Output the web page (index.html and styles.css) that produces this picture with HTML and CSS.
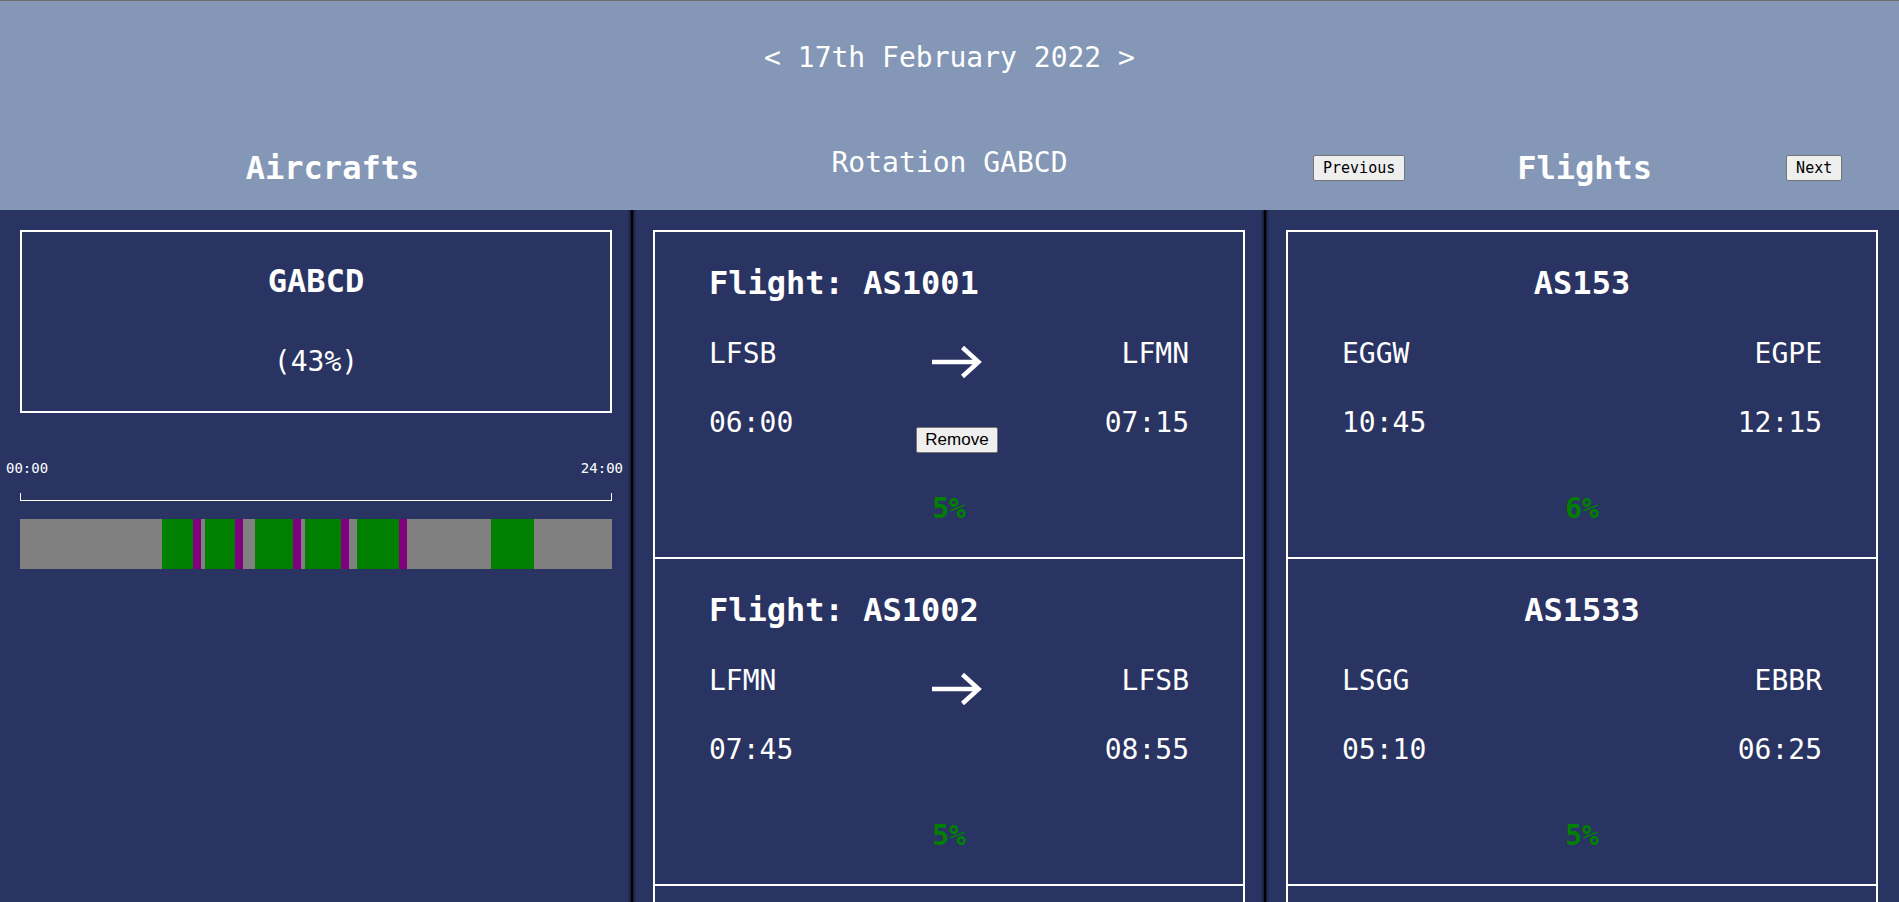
FILE: index.html
```html
<!DOCTYPE html>
<html lang="en">
<head>
<meta charset="utf-8">
<title>Rotation planner</title>
<link rel="stylesheet" href="styles.css">
</head>
<body>
<header class="topbar">
  <div class="date-nav">&lt; 17th February 2022 &gt;</div>
  <div class="titles">
    <div class="title-aircrafts"><h2 class="title-big">Aircrafts</h2></div>
    <div class="title-rotation"><h3 class="title-mid">Rotation GABCD</h3></div>
    <div class="title-flights">
      <button class="nav-btn">Previous</button>
      <h2 class="title-big flights-title">Flights</h2>
      <button class="nav-btn">Next</button>
    </div>
  </div>
</header>

<main class="board">
  <section class="column">
    <div class="aircraft-card">
      <h2 class="card-title">GABCD</h2>
      <p class="usage">(43%)</p>
    </div>
    <div class="timeline">
      <div class="time-labels"><span>00:00</span><span>24:00</span></div>
      <div class="bracket"></div>
      <div class="bar">
        <div class="seg idle" style="width:23.93%"></div>
        <div class="seg flight" style="width:5.24%"></div>
        <div class="seg turn" style="width:1.39%"></div>
        <div class="seg idle" style="width:0.68%"></div>
        <div class="seg flight" style="width:5.05%"></div>
        <div class="seg turn" style="width:1.37%"></div>
        <div class="seg idle" style="width:2.01%"></div>
        <div class="seg flight" style="width:6.47%"></div>
        <div class="seg turn" style="width:1.32%"></div>
        <div class="seg idle" style="width:0.76%"></div>
        <div class="seg flight" style="width:6.0%"></div>
        <div class="seg turn" style="width:1.39%"></div>
        <div class="seg idle" style="width:1.32%"></div>
        <div class="seg flight" style="width:7.1%"></div>
        <div class="seg turn" style="width:1.35%"></div>
        <div class="seg idle" style="width:14.16%"></div>
        <div class="seg flight" style="width:7.3%"></div>
        <div class="seg idle" style="width:13.16%"></div>
      </div>
    </div>
  </section>

  <section class="column">
    <div class="card-list">
      <div class="flight-card">
        <h2 class="card-title">Flight: AS1001</h2>
        <div class="route">
          <span>LFSB</span>
          <div class="mid"><svg class="arrow" width="52" height="36" viewBox="0 0 52 36"><path d="M1 18H47M31.5 3.5L47.5 18L31.5 32.5" fill="none" stroke="#fff" stroke-width="4.5"/></svg></div>
          <span class="end">LFMN</span>
        </div>
        <div class="route">
          <span>06:00</span>
          <div class="mid"><button class="remove-btn">Remove</button></div>
          <span class="end">07:15</span>
        </div>
        <p class="pct">5%</p>
      </div>
      <div class="flight-card">
        <h2 class="card-title">Flight: AS1002</h2>
        <div class="route">
          <span>LFMN</span>
          <div class="mid"><svg class="arrow" width="52" height="36" viewBox="0 0 52 36"><path d="M1 18H47M31.5 3.5L47.5 18L31.5 32.5" fill="none" stroke="#fff" stroke-width="4.5"/></svg></div>
          <span class="end">LFSB</span>
        </div>
        <div class="route">
          <span>07:45</span>
          <div class="mid"></div>
          <span class="end">08:55</span>
        </div>
        <p class="pct">5%</p>
      </div>
      <div class="flight-card placeholder"></div>
    </div>
  </section>

  <section class="column">
    <div class="card-list">
      <div class="flight-card centered">
        <h2 class="card-title">AS153</h2>
        <div class="route two">
          <span>EGGW</span>
          <span class="end">EGPE</span>
        </div>
        <div class="route two">
          <span>10:45</span>
          <span class="end">12:15</span>
        </div>
        <p class="pct">6%</p>
      </div>
      <div class="flight-card centered">
        <h2 class="card-title">AS1533</h2>
        <div class="route two">
          <span>LSGG</span>
          <span class="end">EBBR</span>
        </div>
        <div class="route two">
          <span>05:10</span>
          <span class="end">06:25</span>
        </div>
        <p class="pct">5%</p>
      </div>
      <div class="flight-card placeholder"></div>
    </div>
  </section>
</main>
</body>
</html>
```

FILE: styles.css
```css
* {
  box-sizing: border-box;
}

html, body {
  margin: 0;
  padding: 0;
}

body {
  background: #293462;
  color: #fff;
  font-family: "DejaVu Sans Mono", monospace;
  height: 100vh;
  overflow: hidden;
}

h2, h3, p {
  margin: 0;
}

/* ---------- header ---------- */
.topbar {
  height: 210px;
  background: #8497b6;
  border-top: 1px solid #6e6e6e;
  padding-top: 40px;
}

.date-nav {
  font-size: 28px;
  line-height: 33px;
  text-align: center;
}

.titles {
  display: grid;
  grid-template-columns: repeat(3, 1fr);
  height: 70px;
  margin-top: 66px;
}

.title-big {
  font-size: 32px;
  line-height: 38px;
  font-weight: bold;
}

.title-mid {
  font-size: 28px;
  line-height: 33px;
  font-weight: normal;
}

.title-aircrafts {
  padding: 9px 0 0 32px;
  text-align: center;
}

.title-rotation {
  padding-top: 6px;
  text-align: center;
}

.title-flights {
  display: flex;
  align-items: center;
  height: 38px;
  margin-top: 9px;
  padding-left: 47px;
}

.flights-title {
  margin: 0 134px 0 112px;
}

.nav-btn {
  font-family: "DejaVu Sans Mono", monospace;
  font-size: 15px;
  line-height: 18px;
  padding: 3px 9px;
  border: 1px solid #767676;
  border-radius: 2px;
  background: #efefef;
  color: #000;
}

/* ---------- board ---------- */
.board {
  display: grid;
  grid-template-columns: repeat(3, 1fr);
  height: calc(100vh - 210px);
  overflow: hidden;
}

.column {
  position: relative;
  padding: 20px 21px 0 20px;
}

.column + .column::before {
  content: "";
  position: absolute;
  top: 0;
  bottom: 0;
  left: -2px;
  width: 2px;
  background: #000;
  box-shadow: 0 0 3px 1px rgba(0, 0, 0, 0.65);
}

.card-title {
  font-size: 32px;
  line-height: 38px;
  font-weight: bold;
}

/* aircraft card */
.aircraft-card {
  border: 2px solid #fff;
  padding: 30px 20px 33px;
  text-align: center;
}

.usage {
  margin-top: 45px;
  font-size: 28px;
  line-height: 33px;
}

/* timeline */
.timeline {
  margin-top: 47px;
}

.time-labels {
  display: flex;
  justify-content: space-between;
  margin: 0 -11px 0 -14px;
  font-size: 14px;
  line-height: 17px;
}

.bracket {
  margin-top: 16px;
  height: 8px;
  border: 1px solid #fff;
  border-top: none;
}

.bar {
  display: flex;
  height: 50px;
  margin-top: 18px;
}

.seg {
  height: 100%;
}

.seg.idle { background: #808080; }
.seg.flight { background: #008000; }
.seg.turn { background: #800080; }

/* flight cards */
.flight-card {
  border: 2px solid #fff;
  padding: 32px 54px 32px;
}

.flight-card + .flight-card {
  border-top: none;
}

.flight-card.placeholder {
  height: 327px;
}

.flight-card.centered .card-title {
  text-align: center;
}

.route {
  display: grid;
  grid-template-columns: 1fr auto 1fr;
  grid-template-rows: 33px;
  margin-top: 35px;
  font-size: 28px;
  line-height: 33px;
}

.route + .route {
  margin-top: 36px;
}

.route.two {
  grid-template-columns: 1fr 1fr;
}

.route .end {
  text-align: right;
}

.route .mid {
  margin-left: 16px;
  align-self: start;
  display: flex;
  justify-content: center;
  min-width: 82px;
}

.arrow {
  display: block;
  margin-top: 7px;
}

.remove-btn {
  margin-top: 21px;
  font-family: "Liberation Sans", Arial, sans-serif;
  font-size: 17px;
  line-height: 20px;
  padding: 2px 8px;
  border: 1px solid #767676;
  border-radius: 2px;
  background: #efefef;
  color: #000;
}

.pct {
  margin-top: 53px;
  text-align: center;
  color: #008000;
  font-weight: bold;
  font-size: 28px;
  line-height: 33px;
}
```
